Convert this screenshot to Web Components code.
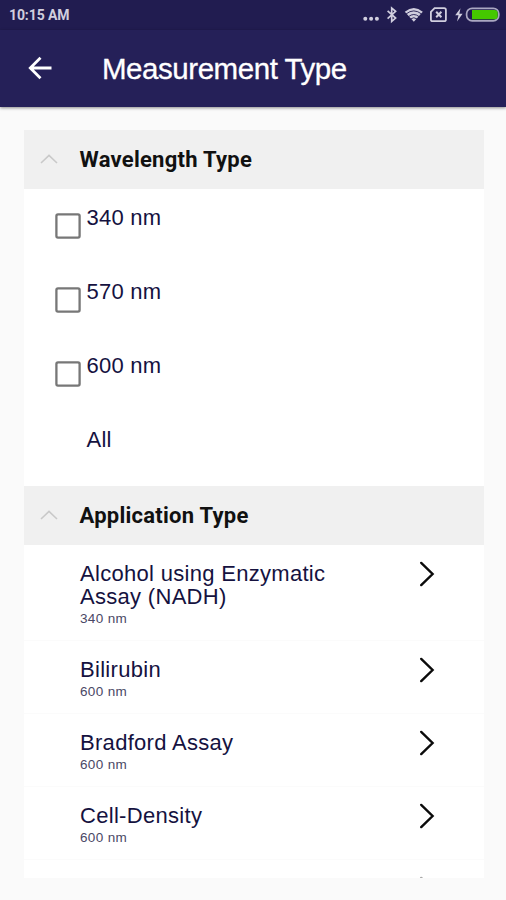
<!DOCTYPE html>
<html lang="en">
<head>
<meta charset="utf-8">
<title>Measurement Type</title>
<style>
html,body{margin:0;height:100%;overflow:hidden;background:#fafafa}
body{font-family:"Liberation Sans",Arial,sans-serif;color:#15123f}
</style>
</head>
<body>
<measure-app></measure-app>
<script>
const define = (name, html) => {
  const template = document.createElement('template');
  template.innerHTML = html;
  customElements.define(name, class extends HTMLElement {
    constructor() {
      super();
      this.attachShadow({ mode: 'open' }).append(template.content.cloneNode(true));
    }
  });
};

define('status-bar', `
<style>
:host{display:flex;justify-content:space-between;height:30px;background:#211c50;color:#d0cede;box-sizing:border-box;padding-left:9px}
span{font:700 14px/30px Roboto,sans-serif;letter-spacing:-.1px}
svg{display:block}
</style>
<span><slot></slot></span>
<svg width="146" height="30" viewBox="360 0 146 30" fill="none" stroke="#d0cede">
  <g fill="#d0cede" stroke="none"><circle cx="365.3" cy="18.8" r="2"/><circle cx="371.1" cy="18.8" r="2"/><circle cx="376.9" cy="18.8" r="2"/></g>
  <path d="M387.6 10.8l8 7.3-3.9 3.4V8l3.9 3.3-8 7.3" stroke-width="1.7"/>
  <path d="M413.8 21.8L404.8 11.8q9-7.4 18 0z" fill="#d0cede" stroke="none"/>
  <g stroke="#211c50" stroke-width=".9"><path d="M406 14q7.8-6.2 15.6 0M408.4 16.7q5.4-4.4 10.8 0M410.6 19q3.2-2.6 6.4 0"/></g>
  <path d="M434.6 8.2h9.5q1.8 0 1.8 1.8v9.4q0 1.8-1.8 1.8h-11.4q-1.8 0-1.8-1.8v-7.5z" stroke-width="1.8"/>
  <path d="M436.2 11.8l5.2 5.4m0-5.4l-5.2 5.4" stroke-width="2"/>
  <path d="M460.5 8.2l-5.3 7h3.3l-1.5 6.3 5.6-7.7h-3.3z" fill="#d0cede" stroke="none"/>
  <rect x="466.6" y="8.3" width="32.2" height="12.5" rx="5.5" stroke="#aaa7c2" stroke-width="1.7"/>
  <path d="M472 10h22.5q3.2 0 3.2 3v3.2q0 3-3.2 3H472z" fill="#45c800" stroke="none"/>
</svg>`);

define('app-bar', `
<style>
:host{display:flex;align-items:center;height:77px;background:#252058;color:#fff;box-shadow:0 1px 3px rgba(0,0,0,.45);position:relative;box-sizing:border-box;padding-left:28px}
svg{flex:none;margin:-1px 50px 0 0}
h1{margin:0;font-size:29.5px;line-height:34px;font-weight:400;letter-spacing:-.45px;-webkit-text-stroke:.3px #fff}
</style>
<svg width="24" height="24" viewBox="0 0 24 24" fill="none" stroke="#fff" stroke-width="2.8"><path d="M23.5 12H2.5M12.5 1.8L2.3 12l10.2 10.2"/></svg>
<h1><slot></slot></h1>`);

define('section-header', `
<style>
:host{display:flex;align-items:center;height:59px;background:#f0f0f0;color:#111;padding-left:16px}
svg{flex:none;margin:-2px 21.5px 0 0}
h2{margin:0;font:700 22px/26px Roboto,sans-serif;letter-spacing:.25px;padding-top:1px}
</style>
<svg width="18" height="10" viewBox="0 0 18 10" fill="none" stroke="#c9c9c9" stroke-width="1.6"><path d="M1 9l8-7.6L17 9"/></svg>
<h2><slot></slot></h2>`);

define('check-option', `
<style>
:host{display:flex;height:74px;padding-left:31px;gap:5.5px;font-size:22px;line-height:26px}
svg{flex:none;margin-top:23.5px}
:host([plain]) svg{visibility:hidden}
span{margin-top:16px;letter-spacing:.25px}
</style>
<svg width="26" height="26" viewBox="0 0 26 26"><rect x="1.4" y="1.4" width="23.2" height="23.2" rx="1.6" fill="none" stroke="#777" stroke-width="2.3"/></svg><span><slot></slot></span>`);

define('application-row', `
<style>
:host{display:flex;justify-content:space-between;box-sizing:border-box;height:73px;padding:17px 49px 0 56px;border-bottom:1px solid #fbfbfb}
:host([tall]){height:96px}
.name{width:270px;font-size:22px;line-height:23px;letter-spacing:.3px}
.note{font-size:13.5px;line-height:22px;letter-spacing:.35px;color:#4a4865}
svg{flex:none;margin-top:-1.5px}
:host([faint]) svg{opacity:.35}
</style>
<div><div class="name"><slot></slot></div><div class="note"><slot name="note"></slot></div></div>
<svg width="16" height="26" viewBox="0 0 16 26" fill="none" stroke="#0b0b0b" stroke-width="2.4" stroke-linecap="round"><path d="M2.2 1.9L13.6 13 2.2 24.1"/></svg>`);

define('measure-app', `
<style>
:host{display:block}
main{margin:23px 22px 0 24px;height:748px;overflow:hidden;background:#fff}
.group{height:297px}
</style>
<status-bar>10:15 AM</status-bar>
<app-bar>Measurement Type</app-bar>
<main>
  <section-header>Wavelength Type</section-header>
  <div class="group">
    <check-option>340 nm</check-option>
    <check-option>570 nm</check-option>
    <check-option>600 nm</check-option>
    <check-option plain>All</check-option>
  </div>
  <section-header>Application Type</section-header>
  <application-row tall>Alcohol using Enzymatic Assay (NADH)<span slot="note">340 nm</span></application-row>
  <application-row>Bilirubin<span slot="note">600 nm</span></application-row>
  <application-row>Bradford Assay<span slot="note">600 nm</span></application-row>
  <application-row>Cell-Density<span slot="note">600 nm</span></application-row>
  <application-row faint></application-row>
</main>`);
</script>
</body>
</html>
